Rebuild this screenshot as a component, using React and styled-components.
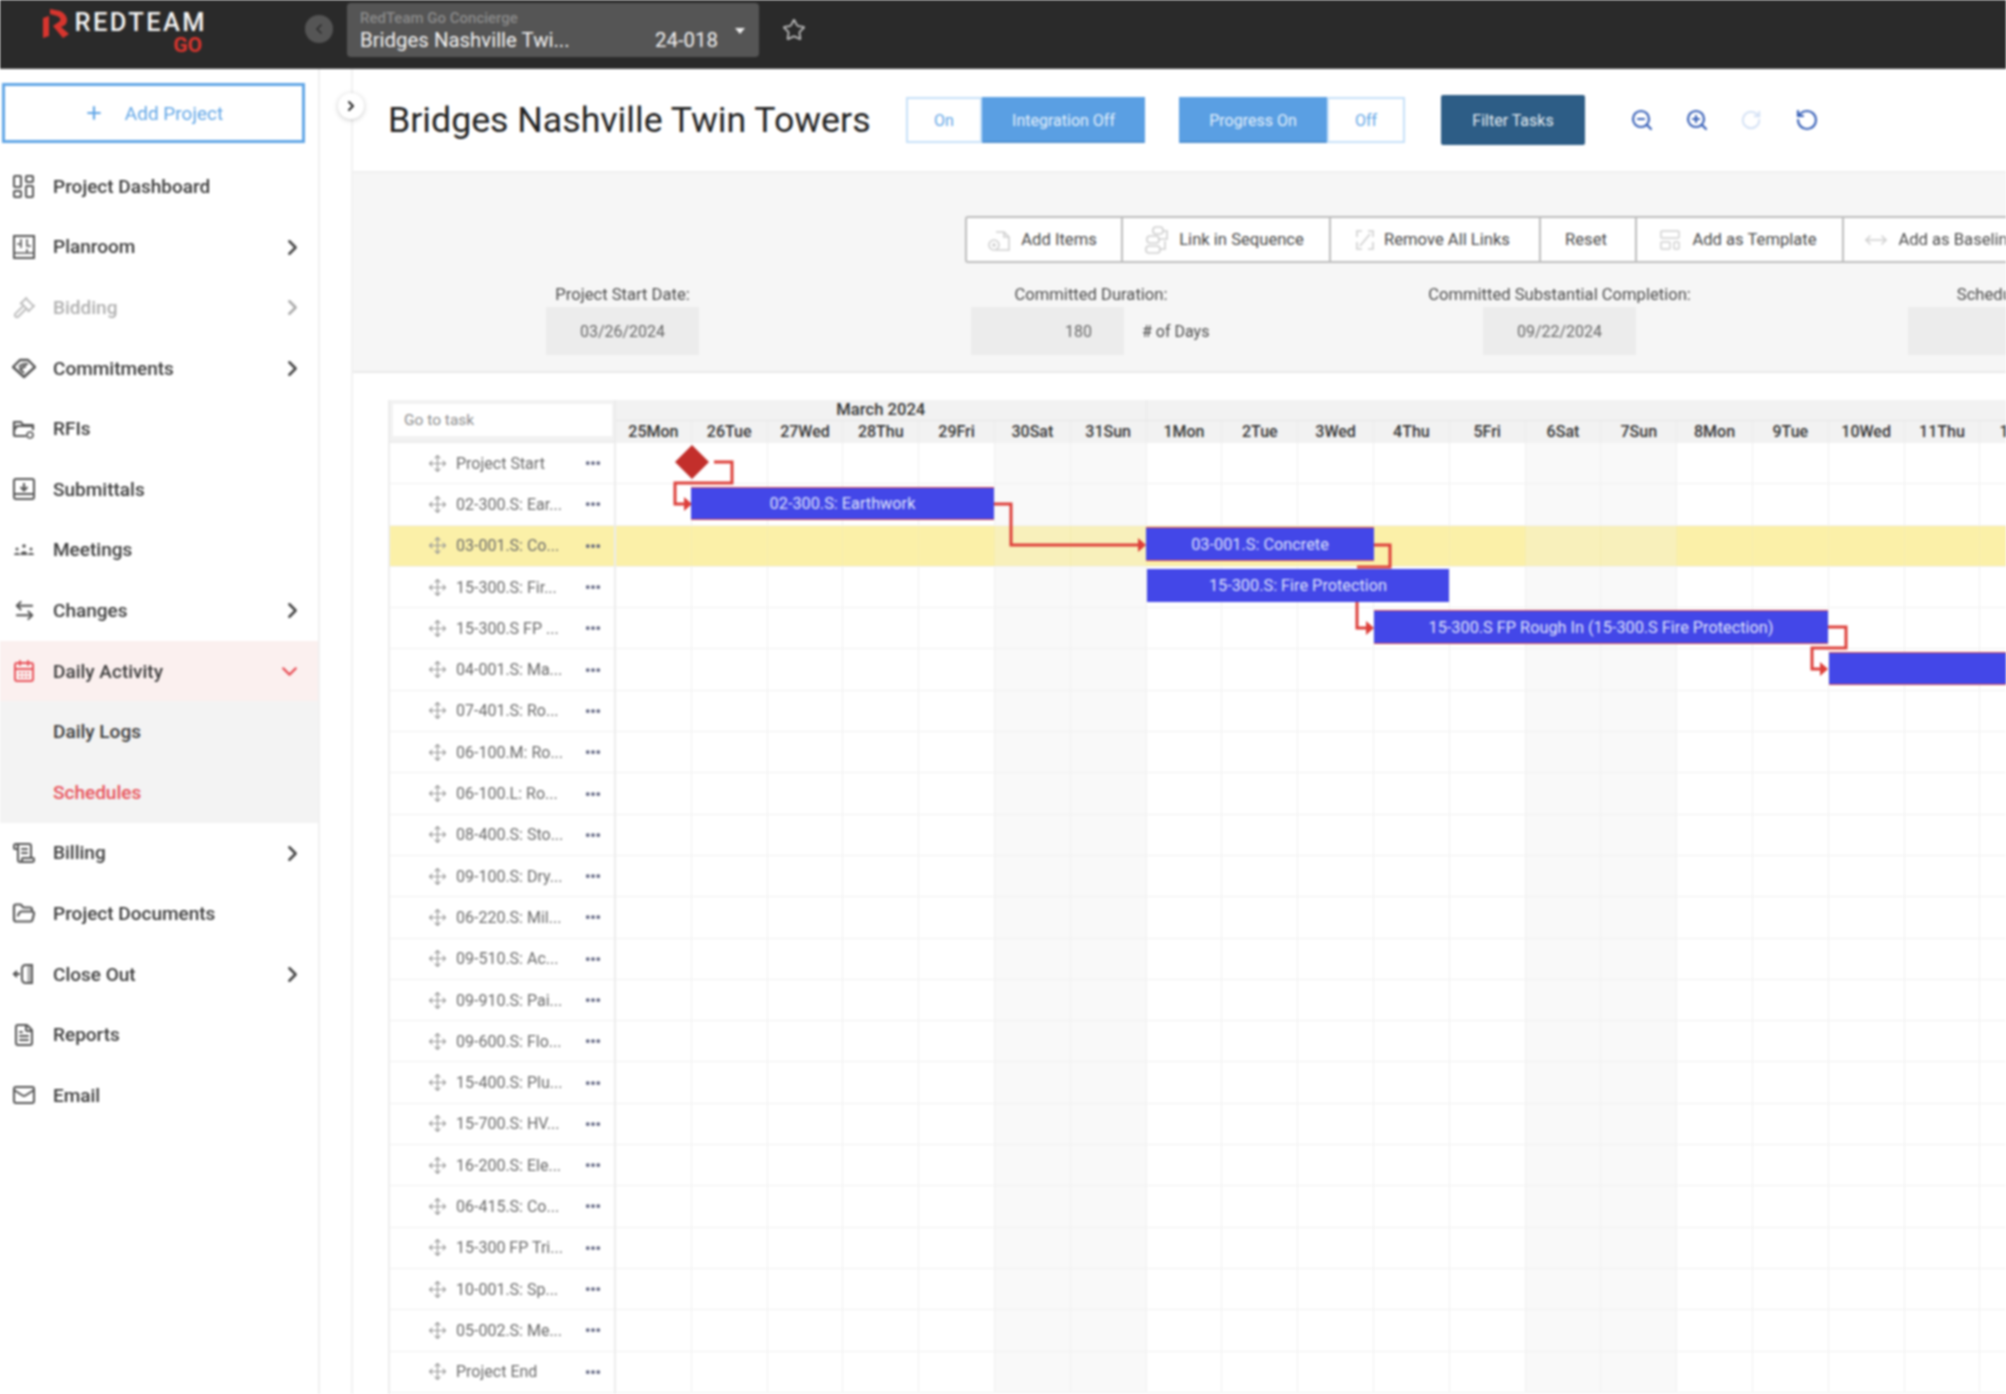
import React from 'react';
import styled, { createGlobalStyle } from 'styled-components';
import {
  Gavel, ArrowLeftRight, FolderOpen, FileText, Mail, ChevronRight, ChevronLeft, ChevronDown,
  Plus, Star, ZoomIn, ZoomOut, RotateCw, RotateCcw, Move, Ellipsis, ScrollText, LayoutTemplate, MoveHorizontal, CalendarDays
} from 'lucide-react';

const Global = createGlobalStyle`
  html, body { margin: 0; padding: 0; width: 2006px; height: 1394px; overflow: hidden; background: #fff; }
  * { box-sizing: border-box; }
  body { font-family: Roboto, "Liberation Sans", sans-serif; }
`;

const Page = styled.div`
  width: 2006px; height: 1394px; overflow: hidden; display: flex; flex-direction: column;
  filter: blur(0.8px);
`;
const TopBar = styled.header`
  height: 69px; flex: none; background: #2a2a2a; display: flex; align-items: flex-start;
  border-bottom: 1px solid #4a4a4a; position: relative;
`;
const LogoBox = styled.div`
  width: 305px; flex: none; padding-left: 43px; display: flex; align-items: flex-start; height: 66px; padding-top: 9px;
`;
const LogoWords = styled.div`
  display: flex; flex-direction: column; align-items: flex-end; margin-left: 3px; width: 135px; padding-top: 1px; gap: 2px;
`;
const LogoName = styled.span`
  color: #f4f4f4; font-size: 25.5px; line-height: 24px; font-weight: 500; letter-spacing: 2.4px; white-space: nowrap;
`;
const LogoGo = styled.span`
  color: #d8352e; font-size: 21px; line-height: 19px; font-weight: 700; margin-right: 5px;
`;
const BackCircle = styled.div`
  width: 28px; height: 28px; border-radius: 50%; background: #555; color: #2a2a2a; display: flex; align-items: center; justify-content: center; flex: none; margin-top: 15px;
`;
const Selector = styled.div`
  margin-left: 14px; margin-top: 3px; width: 412px; height: 54px; background: #555; border-radius: 4px; flex: none; padding: 5px 12px 0 13px; position: relative;
`;
const SelectorLabel = styled.div`color: #8b8b8b; font-size: 15px; line-height: 20px; font-weight: 500;`;
const SelectorRow = styled.div`display: flex; color: #f2f2f2; font-size: 20.4px; line-height: 25px; justify-content: space-between; width: 358px;`;
const Caret = styled.span`
  position: absolute; right: 14px; top: 25px; width: 0; height: 0; border-left: 5px solid transparent; border-right: 5px solid transparent; border-top: 6px solid #eee;
`;
const StarBox = styled.div`margin-left: 23px; margin-top: 18px; color: #bdbdbd; display: flex;`;

const Body = styled.div`flex: 1; display: flex; min-height: 0; position: relative;`;
const Sidebar = styled.nav`
  width: 320px; flex: none; background: #fff; border-right: 2px solid #f0f0f0; padding-top: 14px; display: flex; flex-direction: column;
`;
const AddButton = styled.div`
  margin-left: 2px; width: 303px; height: 60px; border: 3px solid #62a6e6; display: flex; align-items: center; justify-content: center;
  gap: 21px; color: #62a6e6; font-size: 19px; font-weight: 400; margin-bottom: 13px;
`;
const NavItem = styled.div`
  height: 60.6px; flex: none; display: flex; align-items: center; position: relative;
  font-size: 19px; font-weight: 500;
  color: ${p => p.$dim ? '#b0b0b0' : p.$red ? '#e8525a' : '#3c3c3c'};
  background: ${p => p.$active ? '#fbf0ef' : p.$sub ? '#f3f3f3' : 'transparent'};
  padding-left: ${p => p.$sub ? '53px' : '12px'};
`;
const NavIcon = styled.span`
  width: 24px; height: 24px; margin-right: 17px; display: flex; align-items: center; justify-content: center;
  color: ${p => p.$dim ? '#bdbdbd' : p.$red ? '#e8525a' : '#555'};
`;
const NavArrow = styled.span`
  position: absolute; left: ${p => p.$red ? 277 : 280}px; top: 18px; display: flex;
  color: ${p => p.$dim ? '#aaa' : p.$red ? '#e8525a' : '#444'};
`;
const Gutter = styled.div`width: 33px; flex: none; background: #fff; border-right: 2px solid #f1f1f1;`;
const CollapseBtn = styled.div`
  position: absolute; left: 338px; top: 24px; width: 26px; height: 26px; border-radius: 50%; background: #fff; box-shadow: 0 1px 5px rgba(0,0,0,.22);
  display: flex; align-items: center; justify-content: center; color: #222; z-index: 3;
`;
const Main = styled.main`flex: 1; min-width: 0; display: flex; flex-direction: column; overflow: hidden;`;
const HeaderRow = styled.div`
  height: 104px; flex: none; padding-left: 35px; display: flex; align-items: center; background: #fff; border-bottom: 2px solid #f0f0f0;
`;
const Title = styled.h1`
  margin: 0 36px 0 0; width: 482px; flex: none; font-size: 35.7px; font-weight: 400; color: #222; white-space: nowrap;
`;
const Toggle = styled.div`display: flex; height: 46px; margin-right: ${p => p.$mr}px; flex: none;`;
const ToggleBtn = styled.div`
  width: ${p => p.$w}px; display: flex; align-items: center; justify-content: center; font-size: 16px;
  color: ${p => p.$on ? '#e4f0fb' : '#62a6e6'};
  background: ${p => p.$on ? '#5a9fe3' : '#fff'};
  border: 2px solid ${p => p.$on ? '#5a9fe3' : '#c6e0f8'};
  border-bottom-color: ${p => p.$on ? '#4f8fd0' : '#c6e0f8'};
`;
const FilterBtn = styled.div`
  width: 144px; height: 50px; flex: none; background: #2d5d86; color: #e6edf3; font-size: 16px; display: flex; align-items: center; justify-content: center;
  border-radius: 2px; margin-right: 45px;
`;
const IconBtn = styled.span`
  width: 24px; margin-right: 31px; display: flex; flex: none; color: ${p => p.$faint ? '#d5e2f5' : '#3a62b8'};
`;
const Panel = styled.section`
  height: 200px; flex: none; background: #f6f6f6; border-bottom: 2px solid #e9e9e9; padding-top: 43px;
`;
const Toolbar = styled.div`
  display: flex; margin-left: 612px; height: 47px; width: max-content; background: #fff; border: 2px solid #bdbdbd; border-right: none; border-radius: 3px 0 0 3px;
`;
const ToolBtn = styled.div`
  width: ${p => p.$w}px; flex: none; display: flex; align-items: center; justify-content: center; gap: 10px; font-size: 16.6px; color: #4a4a4a;
  border-right: 2px solid #bdbdbd; padding-right: 4px;
  svg { color: #cfcfcf; flex: none; }
`;
const Fields = styled.div`display: flex; margin-left: 193px; margin-top: 20px; gap: 272px;`;
const Field = styled.div`display: flex; flex-direction: column; align-items: center; flex: none; width: ${p => p.$w}px;`;
const FieldLabel = styled.div`font-size: 16.6px; line-height: 24px; color: #4a4a4a; white-space: nowrap; height: 24px;`;
const FieldRow = styled.div`display: flex; align-items: center; align-self: flex-start; gap: 18px;`;
const FieldBox = styled.div`
  width: 153px; height: 48px; background: #ececec; font-size: 16px; color: #666; display: flex; align-items: center; flex: none;
  justify-content: ${p => p.$right ? 'flex-end' : 'center'}; padding-right: ${p => p.$right ? '32px' : '0'};
`;
const FieldNote = styled.span`font-size: 16px; color: #4a4a4a; white-space: nowrap;`;

const Gantt = styled.section`flex: 1; min-height: 0; margin-top: 27px; margin-left: 35px; display: flex; overflow: hidden;`;
const TaskPanel = styled.div`width: 228px; flex: none; border-left: 2px solid #ececec; border-right: 2px solid #ececec;`;
const TaskHead = styled.div`
  height: 43px; background: #f2f2f2; padding: 4px 2px 6px 3px; border-bottom: 2px solid #ececec;
`;
const TaskSearch = styled.div`
  height: 32px; background: #fff; padding-left: 11px; display: flex; align-items: center; font-size: 15.5px; color: #8d8d8d;
`;
const TaskRow = styled.div`
  height: 41.3px; display: flex; align-items: center; position: relative; padding-left: 38px;
  background: ${p => p.$hl ? '#fbf0a8' : '#fff'}; border-bottom: 1.5px solid #f1f1f1;
  font-size: 16px; color: #6a6a6a; white-space: nowrap;
  svg { flex: none; }
`;
const TaskName = styled.span`margin-left: 9px; width: 128px; overflow: hidden;`;
const Dots = styled.span`display: flex; color: #555a78;`;

const Timeline = styled.div`flex: 1; min-width: 0; overflow: hidden;`;
const MonthRow = styled.div`display: flex; height: 21px; background: #f2f2f2; border-bottom: 1px solid #e6e6e6;`;
const MonthCell = styled.div`
  width: ${p => p.$w}px; flex: none; text-align: center; font-size: 16.6px; line-height: 20px; font-weight: 500; color: #333; border-right: 1px solid #e8e8e8;
`;
const DayRow = styled.div`display: flex; height: 22px; background: #f2f2f2; width: max-content;`;
const DayCell = styled.div`
  width: 75.8px; flex: none; text-align: center; font-size: 16px; line-height: 21px; font-weight: 500; color: #333; border-right: 1px solid #ebebeb; white-space: nowrap;
`;
const Canvas = styled.div`position: relative; width: 1440px;`;
const GridRow = styled.div`display: flex; height: 41.3px; border-bottom: 1.5px solid #f1f1f1;`;
const GridCell = styled.div`
  width: 75.8px; flex: none; border-right: 1px solid #f0f0f0;
  background: ${p => p.$hl ? (p.$wk ? '#f8f0bb' : '#fbf0a8') : (p.$wk ? '#f9f9f9' : '#fff')};
  border-right-color: ${p => p.$hl ? '#f6ecb0' : '#f0f0f0'};
`;
const Bar = styled.div`
  position: absolute; background: #4347e8; color: #dfe2fb; font-size: 16.3px; display: flex; align-items: center; justify-content: center; white-space: nowrap;
  border-top: 1.5px solid ${p => p.$edge ? '#d8474f' : '#4347e8'}; border-bottom: 1.5px solid ${p => p.$edge ? '#d8474f' : '#4347e8'};
  z-index: 2;
`;
const LinkLayer = styled.svg`position: absolute; left: 0; top: 0; z-index: 1;`;
const DiamondLayer = styled(LinkLayer)`z-index: 3;`;

const DashIcon = () => (
  <svg width="22" height="24" viewBox="0 0 22 24" fill="none" stroke="currentColor" strokeWidth="2">
    <rect x="1" y="2" width="7" height="11" rx="1" /><rect x="13" y="2" width="7" height="6" rx="1" />
    <rect x="1" y="17" width="7" height="6" rx="1" /><rect x="13" y="12" width="7" height="11" rx="1" />
  </svg>
);
const PlanIcon = () => (
  <svg width="22" height="24" viewBox="0 0 22 24" fill="none" stroke="currentColor" strokeWidth="2">
    <rect x="1" y="1" width="20" height="22" /><path d="M1 18h20M8 4v9M8 9H4M14 4v7h4M14 14v4" strokeWidth="1.6" />
  </svg>
);
const CommitIcon = () => (
  <svg width="24" height="24" viewBox="0 0 24 24" fill="none" stroke="currentColor" strokeWidth="2.4" strokeLinejoin="round">
    <path d="M8 4h8l7 7-11 10L1 11z" /><path d="M7 11c3-4 7-3 9-3M12 17l-4-4 6-3" strokeWidth="2" />
  </svg>
);
const RfiIcon = () => (
  <svg width="24" height="24" viewBox="0 0 24 24" fill="none" stroke="currentColor" strokeWidth="2.2" strokeLinejoin="round">
    <path d="M14 19H3a1 1 0 0 1-1-1V5h7l2 3h10v5" /><path d="M2 13l3-4h17" /><circle cx="18" cy="18" r="3" strokeWidth="1.6" />
  </svg>
);
const BoxDown = () => (
  <svg width="22" height="24" viewBox="0 0 22 24" fill="none" stroke="currentColor" strokeWidth="2">
    <rect x="1" y="2" width="20" height="20" rx="2" /><path d="M1 17h20M11 6v7M7.5 10l3.5 3.5L14.5 10" />
  </svg>
);
const MeetIcon = () => (
  <svg width="22" height="14" viewBox="0 0 22 14" fill="currentColor">
    <circle cx="4" cy="6" r="1.5" /><circle cx="11" cy="3" r="1.8" /><circle cx="18" cy="6" r="1.5" />
    <path d="M1 12c0-3 6-3 6 0zM7.5 12c0-5 7-5 7 0zM15 12c0-3 6-3 6 0z" />
  </svg>
);
const CloseIcon = () => (
  <svg width="24" height="24" viewBox="0 0 24 24" fill="none" stroke="currentColor" strokeWidth="2">
    <path d="M1 12h7M5 9l-3 3 3 3M10 7c0-3 2-4 4-4h6v18h-6c-2 0-4-1-4-4z" /><path d="M17 4v16" strokeWidth="3" stroke="#aaa" />
  </svg>
);
const AddDocIcon = () => (
  <svg width="24" height="26" viewBox="0 0 24 26" fill="none" stroke="currentColor" strokeWidth="1.6">
    <path d="M9 5h8l5 5v13H9" /><path d="M17 5v5h5" /><circle cx="7" cy="18" r="5" /><path d="M7 16v4M5 18h4" />
  </svg>
);
const LinkSeqIcon = () => (
  <svg width="25" height="28" viewBox="0 0 25 28" fill="none" stroke="currentColor" strokeWidth="1.6">
    <rect x="9" y="1" width="10" height="7" rx="3" /><path d="M19 5h4v8h-9" /><rect x="3" y="10" width="12" height="7" rx="3" /><rect x="2" y="20" width="14" height="7" rx="3" /><path d="M16 23h5v-8" />
  </svg>
);
const BreakIcon = () => (
  <svg width="18" height="22" viewBox="0 0 18 22" fill="none" stroke="currentColor" strokeWidth="1.6">
    <path d="M6 2H1v6M12 2h5v6M1 13v7h5M17 13v7h-5M4 17l10-12" />
  </svg>
);

const nav = [
  { t: 'Project Dashboard', i: <DashIcon /> },
  { t: 'Planroom', i: <PlanIcon />, a: 1 },
  { t: 'Bidding', i: <Gavel size={23} strokeWidth={2} />, a: 1, dim: 1 },
  { t: 'Commitments', i: <CommitIcon />, a: 1 },
  { t: 'RFIs', i: <RfiIcon /> },
  { t: 'Submittals', i: <BoxDown /> },
  { t: 'Meetings', i: <MeetIcon /> },
  { t: 'Changes', i: <ArrowLeftRight size={23} strokeWidth={2} />, a: 1 },
  { t: 'Daily Activity', i: <CalendarDays size={24} strokeWidth={2} />, active: 1 },
  { t: 'Daily Logs', sub: 1 },
  { t: 'Schedules', sub: 1, red: 1 },
  { t: 'Billing', i: <ScrollText size={24} strokeWidth={2} />, a: 1 },
  { t: 'Project Documents', i: <FolderOpen size={25} strokeWidth={2.2} /> },
  { t: 'Close Out', i: <CloseIcon />, a: 1 },
  { t: 'Reports', i: <FileText size={24} strokeWidth={2} /> },
  { t: 'Email', i: <Mail size={24} strokeWidth={2} /> },
];

const tasks = ['Project Start', '02-300.S: Ear...', '03-001.S: Co...', '15-300.S: Fir...', '15-300.S FP ...', '04-001.S: Ma...', '07-401.S: Ro...', '06-100.M: Ro...', '06-100.L: Ro...', '08-400.S: Sto...', '09-100.S: Dry...', '06-220.S: Mil...', '09-510.S: Ac...', '09-910.S: Pai...', '09-600.S: Flo...', '15-400.S: Plu...', '15-700.S: HV...', '16-200.S: Ele...', '06-415.S: Co...', '15-300 FP Tri...', '10-001.S: Sp...', '05-002.S: Me...', 'Project End'];
const days = ['25Mon', '26Tue', '27Wed', '28Thu', '29Fri', '30Sat', '31Sun', '1Mon', '2Tue', '3Wed', '4Thu', '5Fri', '6Sat', '7Sun', '8Mon', '9Tue', '10Wed', '11Thu', '12Fri'];
const weekend = new Set([5, 6, 12, 13]);

const bars = [
  { x: 691, y: 487, x2: 994, y2: 520, t: '02-300.S: Earthwork', edge: 1 },
  { x: 1146, y: 527, x2: 1374, y2: 561, t: '03-001.S: Concrete', edge: 1 },
  { x: 1147, y: 569, x2: 1449, y2: 602, t: '15-300.S: Fire Protection' },
  { x: 1374, y: 610, x2: 1828, y2: 644, t: '15-300.S FP Rough In (15-300.S Fire Protection)', edge: 1 },
  { x: 1829, y: 652, x2: 2100, y2: 685, t: '', edge: 1 },
];
const links = [
  { p: '714,462 732,462 732,483 675,483 675,504 686,504', a: '684,497 692,504 684,511' },
  { p: '994,504 1011,504 1011,545 1140,545', a: '1138,538 1146,545 1138,552' },
  { p: '1374,545 1390,545 1390,567 1357,567', a: null },
  { p: '1357,602 1357,628 1368,628', a: '1366,621 1374,628 1366,635' },
  { p: '1828,627 1846,627 1846,648 1812,648 1812,669 1822,669', a: '1820,662 1828,669 1820,676' },
];

const Links = () => (
  <LinkLayer width="1440" height="950" viewBox="616 443 1440 950">
    {links.map((l, i) => (
      <g key={i}>
        <polyline points={l.p} fill="none" stroke="#dd3f3a" strokeWidth="3" />
        {l.a && <polygon points={l.a} fill="#dd3f3a" />}
      </g>
    ))}
  </LinkLayer>
);

export default function App() {
  return (
    <Page>
      <Global />
      <TopBar>
        <LogoBox>
          <svg width="26" height="30" viewBox="0 0 26 30" style={{ flex: 'none' }}>
            <path d="M0 9 L6 7 L6 27 L0 29Z" fill="#d8352e" />
            <path d="M7 0 L17 2 C24 5 26 12 22 16 L18 18 L26 25 L20 29 L10 17 L17 12 C18 10 17 8 14 7 L7 5Z" fill="#d8352e" />
          </svg>
          <LogoWords>
            <LogoName>REDTEAM</LogoName>
            <LogoGo>GO</LogoGo>
          </LogoWords>
        </LogoBox>
        <BackCircle><ChevronLeft size={16} strokeWidth={2.5} /></BackCircle>
        <Selector>
          <SelectorLabel>RedTeam Go Concierge</SelectorLabel>
          <SelectorRow><span>Bridges Nashville Twi...</span><span>24-018</span></SelectorRow>
          <Caret />
        </Selector>
        <StarBox><Star size={24} strokeWidth={1.8} /></StarBox>
      </TopBar>
      <Body>
        <Sidebar>
          <AddButton><Plus size={20} strokeWidth={2.6} />Add Project</AddButton>
          {nav.map(n => (
            <NavItem key={n.t} $dim={n.dim} $red={n.red} $active={n.active} $sub={n.sub}>
              {n.i && <NavIcon $dim={n.dim} $red={n.active}>{n.i}</NavIcon>}
              {n.t}
              {n.a && <NavArrow $dim={n.dim}><ChevronRight size={25} strokeWidth={2.4} /></NavArrow>}
              {n.active && <NavArrow $red><ChevronDown size={25} strokeWidth={2.2} /></NavArrow>}
            </NavItem>
          ))}
        </Sidebar>
        <Gutter />
        <CollapseBtn><ChevronRight size={16} strokeWidth={3} /></CollapseBtn>
        <Main>
          <HeaderRow>
            <Title>Bridges Nashville Twin Towers</Title>
            <Toggle $mr={34}>
              <ToggleBtn $w={76}>On</ToggleBtn>
              <ToggleBtn $w={163} $on>Integration Off</ToggleBtn>
            </Toggle>
            <Toggle $mr={36}>
              <ToggleBtn $w={148} $on>Progress On</ToggleBtn>
              <ToggleBtn $w={78}>Off</ToggleBtn>
            </Toggle>
            <FilterBtn>Filter Tasks</FilterBtn>
            <IconBtn><ZoomOut size={24} strokeWidth={2.2} /></IconBtn>
            <IconBtn><ZoomIn size={24} strokeWidth={2.2} /></IconBtn>
            <IconBtn $faint><RotateCw size={22} strokeWidth={2.2} /></IconBtn>
            <IconBtn><RotateCcw size={24} strokeWidth={2.2} /></IconBtn>
          </HeaderRow>
          <Panel>
            <Toolbar>
              <ToolBtn $w={156}><AddDocIcon />Add Items</ToolBtn>
              <ToolBtn $w={208}><LinkSeqIcon />Link in Sequence</ToolBtn>
              <ToolBtn $w={210}><BreakIcon />Remove All Links</ToolBtn>
              <ToolBtn $w={96}>Reset</ToolBtn>
              <ToolBtn $w={207}><LayoutTemplate size={24} strokeWidth={1.5} />Add as Template</ToolBtn>
              <ToolBtn $w={199}><MoveHorizontal size={24} strokeWidth={1.5} />Add as Baseline</ToolBtn>
            </Toolbar>
            <Fields>
              <Field $w={153}>
                <FieldLabel>Project Start Date:</FieldLabel>
                <FieldRow><FieldBox>03/26/2024</FieldBox></FieldRow>
              </Field>
              <Field $w={240}>
                <FieldLabel>Committed Duration:</FieldLabel>
                <FieldRow><FieldBox $right>180</FieldBox><FieldNote># of Days</FieldNote></FieldRow>
              </Field>
              <Field $w={153}>
                <FieldLabel>Committed Substantial Completion:</FieldLabel>
                <FieldRow><FieldBox>09/22/2024</FieldBox></FieldRow>
              </Field>
              <Field $w={268}>
                <FieldLabel>Scheduled Completion:</FieldLabel>
                <FieldRow><FieldBox /></FieldRow>
              </Field>
            </Fields>
          </Panel>
          <Gantt>
            <TaskPanel>
              <TaskHead><TaskSearch>Go to task</TaskSearch></TaskHead>
              {tasks.map((t, i) => (
                <TaskRow key={i} $hl={i === 2}>
                  <Move size={19} strokeWidth={1.5} color="#999" />
                  <TaskName>{t}</TaskName>
                  <Dots><Ellipsis size={18} strokeWidth={3} /></Dots>
                </TaskRow>
              ))}
            </TaskPanel>
            <Timeline>
              <MonthRow>
                <MonthCell $w={530.6}>March 2024</MonthCell>
                <MonthCell $w={909.6} />
              </MonthRow>
              <DayRow>{days.map(d => <DayCell key={d}>{d}</DayCell>)}</DayRow>
              <Canvas>
                {tasks.map((_, r) => (
                  <GridRow key={r}>
                    {days.map((d, c) => <GridCell key={d} $wk={weekend.has(c)} $hl={r === 2} />)}
                  </GridRow>
                ))}
                <Links />
                {bars.map((b, i) => (
                  <Bar key={i} $edge={b.edge} style={{ left: b.x - 616, top: b.y - 443, width: b.x2 - b.x, height: b.y2 - b.y }}>{b.t}</Bar>
                ))}
                <DiamondLayer width="1440" height="100" viewBox="616 443 1440 100">
                  <polygon points="692,445 709,462 692,479 675,462" fill="#c32f2b" />
                </DiamondLayer>
              </Canvas>
            </Timeline>
          </Gantt>
        </Main>
      </Body>
    </Page>
  );
}
